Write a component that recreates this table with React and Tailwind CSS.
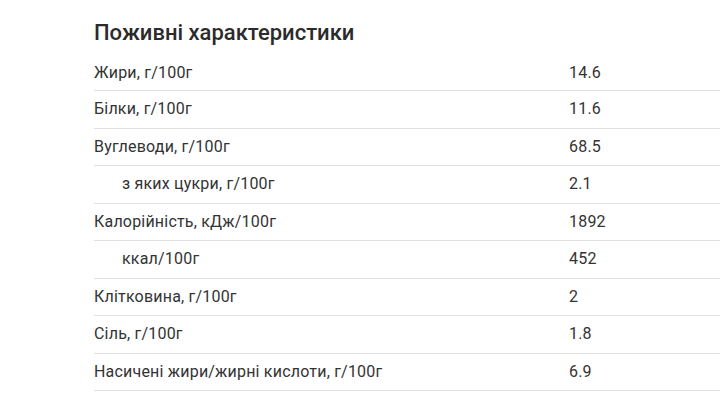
import React from 'react';

const rows = [
    { label: 'Жири, г/100г', value: '14.6' },
    { label: 'Білки, г/100г', value: '11.6' },
    { label: 'Вуглеводи, г/100г', value: '68.5' },
    { label: 'з яких цукри, г/100г', value: '2.1', sub: true },
    { label: 'Калорійність, кДж/100г', value: '1892' },
    { label: 'ккал/100г', value: '452', sub: true },
    { label: 'Клітковина, г/100г', value: '2' },
    { label: 'Сіль, г/100г', value: '1.8' },
    { label: 'Насичені жири/жирні кислоти, г/100г', value: '6.9' },
];

const App = () => {
    return (
        <div className="w-[720px] h-[411px] overflow-hidden bg-white pl-[94px] font-['Roboto',sans-serif] text-[#333]">
            <h2 className="pt-[19px] text-[22px] leading-[28px] font-medium text-[#2b2b2b]">Поживні характеристики</h2>
            <div className="mt-[9px] w-[626px]">
                {rows.map((row, idx) => (
                    <div
                        key={idx}
                        className={`flex items-center border-b border-[#e0e0e0] text-[16px] leading-6 tracking-[0.2px] ${idx === 0 ? 'h-[35px]' : 'h-[37.5px]'}`}
                    >
                        <div className={`w-[475px] shrink-0 ${row.sub ? 'pl-7' : ''}`}>{row.label}</div>
                        <div>{row.value}</div>
                    </div>
                ))}
            </div>
        </div>
    );
};

export default App;
